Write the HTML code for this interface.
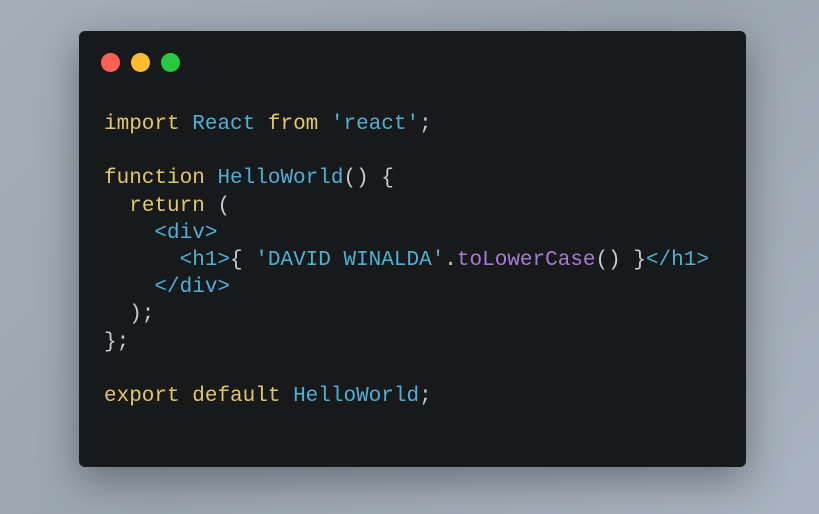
<!DOCTYPE html>
<html><head><style>
html,body{margin:0;padding:0}
body{width:819px;height:514px;overflow:hidden;background:linear-gradient(135deg,#a4aeb9 0%,#9aa5b0 50%,#a8b3bf 100%);position:relative}
.win{position:absolute;left:79px;top:31px;width:667px;height:436px;background:#17191b;border-radius:6px;box-shadow:0 12px 40px rgba(0,0,0,0.35)}
.dot{position:absolute;top:22px;width:19px;height:19px;border-radius:50%}
pre{position:absolute;left:25px;top:80px;margin:0;font-family:"Liberation Mono","DejaVu Sans Mono",monospace;font-size:21px;line-height:27.2px;color:#c8ccd2;letter-spacing:0}
.k{color:#e2c66a}.b{color:#4fb0d6}.p{color:#a87cd6}
</style></head><body>
<div class="win">
<div class="dot" style="left:22px;background:#fe5f57"></div>
<div class="dot" style="left:52px;background:#febc2e"></div>
<div class="dot" style="left:82px;background:#28c840"></div>
<pre><span class="k">import</span> <span class="b">React</span> <span class="k">from</span> <span class="b">'react'</span>;

<span class="k">function</span> <span class="b">HelloWorld</span>() {
  <span class="k">return</span> (
    <span class="b">&lt;div&gt;</span>
      <span class="b">&lt;h1&gt;</span>{ <span class="b">'DAVID WINALDA'</span>.<span class="p">toLowerCase</span>() }<span class="b">&lt;/h1&gt;</span>
    <span class="b">&lt;/div&gt;</span>
  );
};

<span class="k">export</span> <span class="k">default</span> <span class="b">HelloWorld</span>;</pre>
</div>
</body></html>
